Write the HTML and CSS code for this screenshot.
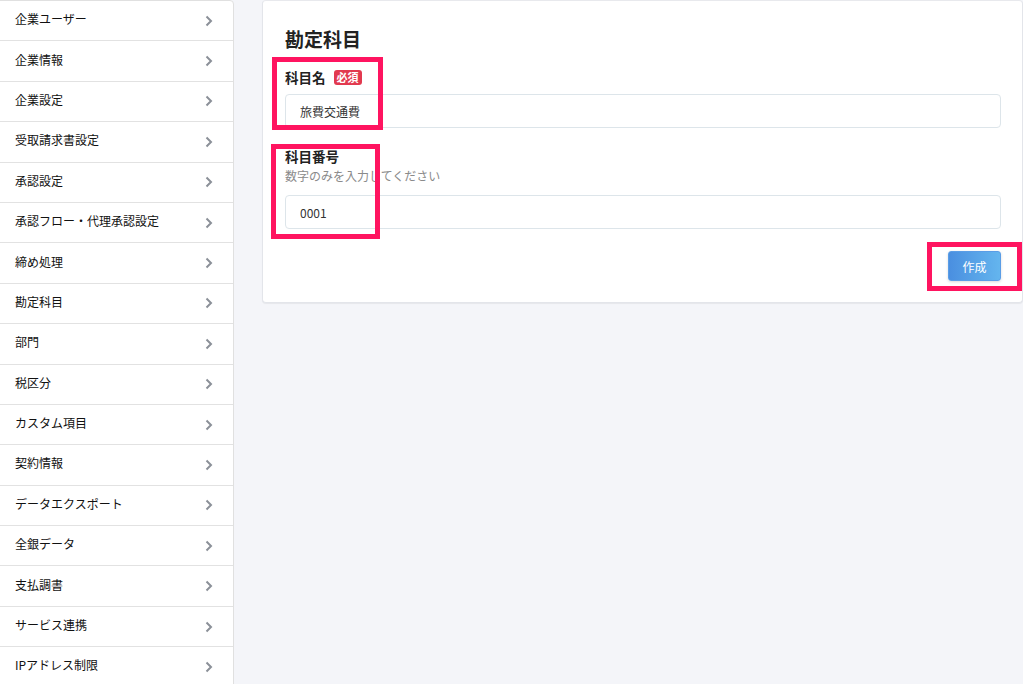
FILE: index.html
```html
<!DOCTYPE html>
<html lang="ja">
<head>
  <meta charset="UTF-8">
  <title>勘定科目</title>
  <link rel="stylesheet" href="styles.css">
</head>
<body>

  <div class="menu">
    <a class="menu-item"><span>企業ユーザー</span><svg viewBox="0 0 8 12"><polyline points="1.5,1.5 6,6 1.5,10.5"/></svg></a>
    <a class="menu-item"><span>企業情報</span><svg viewBox="0 0 8 12"><polyline points="1.5,1.5 6,6 1.5,10.5"/></svg></a>
    <a class="menu-item"><span>企業設定</span><svg viewBox="0 0 8 12"><polyline points="1.5,1.5 6,6 1.5,10.5"/></svg></a>
    <a class="menu-item"><span>受取請求書設定</span><svg viewBox="0 0 8 12"><polyline points="1.5,1.5 6,6 1.5,10.5"/></svg></a>
    <a class="menu-item"><span>承認設定</span><svg viewBox="0 0 8 12"><polyline points="1.5,1.5 6,6 1.5,10.5"/></svg></a>
    <a class="menu-item"><span>承認フロー・代理承認設定</span><svg viewBox="0 0 8 12"><polyline points="1.5,1.5 6,6 1.5,10.5"/></svg></a>
    <a class="menu-item"><span>締め処理</span><svg viewBox="0 0 8 12"><polyline points="1.5,1.5 6,6 1.5,10.5"/></svg></a>
    <a class="menu-item"><span>勘定科目</span><svg viewBox="0 0 8 12"><polyline points="1.5,1.5 6,6 1.5,10.5"/></svg></a>
    <a class="menu-item"><span>部門</span><svg viewBox="0 0 8 12"><polyline points="1.5,1.5 6,6 1.5,10.5"/></svg></a>
    <a class="menu-item"><span>税区分</span><svg viewBox="0 0 8 12"><polyline points="1.5,1.5 6,6 1.5,10.5"/></svg></a>
    <a class="menu-item"><span>カスタム項目</span><svg viewBox="0 0 8 12"><polyline points="1.5,1.5 6,6 1.5,10.5"/></svg></a>
    <a class="menu-item"><span>契約情報</span><svg viewBox="0 0 8 12"><polyline points="1.5,1.5 6,6 1.5,10.5"/></svg></a>
    <a class="menu-item"><span>データエクスポート</span><svg viewBox="0 0 8 12"><polyline points="1.5,1.5 6,6 1.5,10.5"/></svg></a>
    <a class="menu-item"><span>全銀データ</span><svg viewBox="0 0 8 12"><polyline points="1.5,1.5 6,6 1.5,10.5"/></svg></a>
    <a class="menu-item"><span>支払調書</span><svg viewBox="0 0 8 12"><polyline points="1.5,1.5 6,6 1.5,10.5"/></svg></a>
    <a class="menu-item"><span>サービス連携</span><svg viewBox="0 0 8 12"><polyline points="1.5,1.5 6,6 1.5,10.5"/></svg></a>
    <a class="menu-item"><span>IPアドレス制限</span><svg viewBox="0 0 8 12"><polyline points="1.5,1.5 6,6 1.5,10.5"/></svg></a>
  </div>

  <div class="panel">
    <h2>勘定科目</h2>

    <div class="field first">
      <label>科目名 <span class="required">必須</span></label>
      <input type="text" value="旅費交通費">
    </div>

    <div class="field second">
      <label>科目番号</label>
      <div class="hint">数字のみを入力してください</div>
      <input type="text" value="0001">
    </div>

    <div class="actions">
      <button>作成</button>
    </div>

    <!-- 注釈の枠 -->
    <div class="mark mark-name"></div>
    <div class="mark mark-code"></div>
    <div class="mark mark-submit"></div>
  </div>

</body>
</html>
```

FILE: styles.css
```css
body {
  margin: 0;
  font-family: "Noto Sans CJK JP", "Noto Sans", sans-serif;
  background-color: #f4f5f9;
  color: #222;
  display: flex;
  align-items: flex-start;
  gap: 28px;
  height: 684px;
  overflow: hidden;
}
.menu {
  width: 233px;
  flex-shrink: 0;
  margin-left: -1px;
  background-color: #fff;
  border: 1px solid #e0e0e0;
  border-radius: 0 4px 0 0;
}
.menu-item {
  display: flex;
  align-items: center;
  justify-content: space-between;
  height: 39.4px;
  padding: 0 20px 0 15px;
  font-size: 12px;
  color: #111;
  border-bottom: 1px solid #e2e2e2;
}
.menu-item span {
  margin-bottom: 4px;
}
.menu-item svg {
  width: 8px;
  height: 12px;
  fill: none;
  stroke: #8b9098;
  stroke-width: 2;
}
.panel {
  position: relative;
  flex: 1;
  background-color: #fff;
  border: 1px solid #e3e5ea;
  border-top-color: #e8e9ed;
  border-radius: 4px;
  box-shadow: 0 1px 1px rgba(0, 0, 0, 0.06);
  padding: 24px 21px 21px 22px;
}
h2 {
  margin: 0;
  font-size: 19px;
  line-height: 28px;
  font-weight: bold;
  color: #222;
}
.field label {
  display: block;
  font-size: 13.5px;
  line-height: 20px;
  font-weight: bold;
}
.field.first {
  margin-top: 14px;
}
.field.first label {
  margin-bottom: 7px;
}
.field.second {
  margin-top: 18px;
}
.required {
  display: inline-block;
  background-color: #e2394f;
  color: #fff;
  font-size: 11px;
  line-height: 15px;
  padding: 0 3px;
  border-radius: 3px;
  margin-left: 5px;
  vertical-align: 1px;
}
.hint {
  font-size: 12px;
  line-height: 20px;
  color: #8a8a8a;
  margin-bottom: 9px;
}
input {
  display: block;
  box-sizing: border-box;
  width: 100%;
  height: 34px;
  padding: 0 14px;
  border: 1px solid #dde5ea;
  border-radius: 4px;
  font-family: inherit;
  font-size: 12px;
  color: #333;
  background-color: #fff;
}
.actions {
  display: flex;
  justify-content: flex-end;
  margin-top: 22px;
}
button {
  width: 53px;
  height: 30px;
  border: 1px solid #5a9de6;
  border-radius: 3px;
  background: linear-gradient(to right, #4a8fe0, #64b5ee);
  color: #fff;
  font-family: inherit;
  font-size: 12px;
  box-shadow: 0 1px 3px rgba(0, 0, 0, 0.15);
}
.mark {
  position: absolute;
  border: 5px solid #ff1460;
  box-sizing: border-box;
}
.mark-name {
  left: 9px;
  top: 56px;
  width: 111px;
  height: 73px;
}
.mark-code {
  left: 8px;
  top: 143px;
  width: 109px;
  height: 95px;
}
.mark-submit {
  left: 664px;
  top: 241px;
  width: 95px;
  height: 49px;
}
```
